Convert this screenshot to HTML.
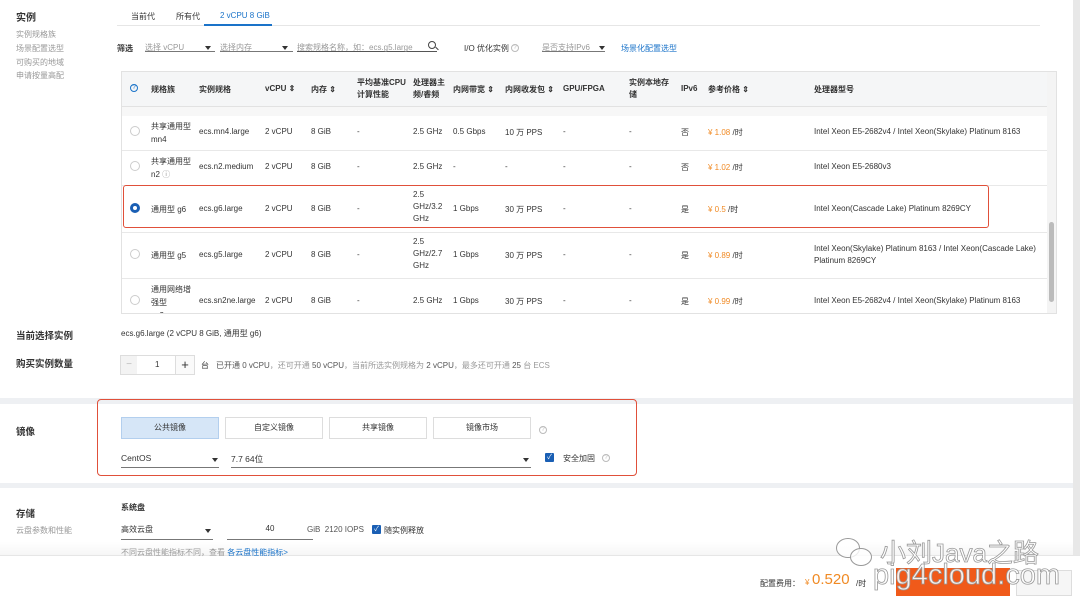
<!DOCTYPE html><html><head><meta charset="utf-8"><style>
*{margin:0;padding:0;box-sizing:border-box}
body{width:1080px;height:600px;overflow:hidden;background:#eef0f3;font-family:"Liberation Sans","Noto Sans CJK SC",sans-serif;font-size:8px;color:#333;position:relative}
div,span{position:absolute;white-space:nowrap}
.p{background:#fff;left:0;width:1073px}
.g{color:#999}.b{color:#1a73c9}.o{color:#f08a24}
.lb{font-size:9.5px;font-weight:bold;color:#333}
.ul{border-bottom:1px solid #777;height:10px}
.tri{width:0;height:0;border-left:3px solid transparent;border-right:3px solid transparent;border-top:4px solid #333}
.q{width:8px;height:8px;border:1px solid #bbb;border-radius:50%;font-size:6px;color:#bbb;text-align:center;line-height:6px}
.rad{width:10px;height:10px;border:1px solid #ccc;border-radius:50%;background:#fff}
.hl{height:1px;background:#e8e8e8;left:122px;width:925px}
.btn{height:22px;border:1px solid #ddd;background:#fff;text-align:center;line-height:20px;font-size:8px;top:417px}
.cb{width:9px;height:9px;background:#1a5fb4;border-radius:1px;color:#fff;font-size:7px;line-height:9px;text-align:center}
.wm{color:rgba(255,255,255,0.9);-webkit-text-stroke:0.8px #999}
</style></head><body>
<div class="p" style="top:0;height:398px"></div>
<div class="p" style="top:404px;height:79px"></div>
<div class="p" style="top:488px;height:67px;background:linear-gradient(#fff 80%,#f6f6f6)"></div>
<div style="left:0;top:555px;width:1080px;height:45px;background:#fff;border-top:1px solid #e6e6e6"></div>
<div style="left:1073px;top:0;width:7px;height:555px;background:#e8e8e8"></div>

<div class="lb" style="left:16px;top:9px;font-size:10px">实例</div>
<div class="g" style="left:16px;top:29px">实例规格族</div>
<div class="g" style="left:16px;top:43px">场景配置选型</div>
<div class="g" style="left:16px;top:57px">可购买的地域</div>
<div class="g" style="left:16px;top:70px">申请按量高配</div>

<div style="left:117px;top:25px;width:923px;height:1px;background:#e6e6e6"></div>
<div style="left:131px;top:11px">当前代</div>
<div style="left:176px;top:11px">所有代</div>
<div class="b" style="left:220px;top:11px">2 vCPU 8 GiB</div>
<div style="left:204px;top:24px;width:68px;height:2px;background:#1a73c9"></div>

<div style="left:117px;top:43px;font-weight:bold">筛选</div>
<div class="ul g" style="left:145px;top:42px;width:70px">选择 vCPU</div><div class="tri" style="left:205px;top:46px"></div>
<div class="ul g" style="left:220px;top:42px;width:73px">选择内存</div><div class="tri" style="left:282px;top:46px"></div>
<div class="ul g" style="left:297px;top:42px;width:140px;border-color:#555">搜索规格名称，如：ecs.g5.large</div>
<div style="left:428px;top:41px;width:8px;height:8px;border:1px solid #444;border-radius:50%"></div>
<div style="left:435px;top:48px;width:4px;height:1px;background:#444;transform:rotate(45deg)"></div>
<div style="left:464px;top:43px">I/O 优化实例</div><div class="q" style="left:511px;top:44px">?</div>
<div class="ul g" style="left:542px;top:42px;width:63px">是否支持IPv6</div><div class="tri" style="left:599px;top:46px"></div>
<div class="b" style="left:621px;top:43px">场景化配置选型</div>

<div style="left:121px;top:71px;width:936px;height:243px;border:1px solid #e2e2e2;background:#fff"></div>
<div style="left:122px;top:72px;width:925px;height:35px;background:#f5f6f7;border-bottom:1px solid #e2e2e2"></div>
<div style="left:122px;top:107px;width:925px;height:9px;background:#f7f7f7"></div>
<div style="left:1047px;top:72px;width:9px;height:241px;background:#f4f4f4"></div>
<div style="left:1049px;top:222px;width:5px;height:80px;background:#bbb;border-radius:3px"></div>
<div class="q" style="left:130px;top:84px;border-color:#1a73c9;color:#1a73c9">?</div>
<div style="top:84px;left:151px;font-weight:bold">规格族</div>
<div style="top:84px;left:199px;font-weight:bold">实例规格</div>
<div style="top:84px;left:265px;font-weight:bold">vCPU ⇕</div>
<div style="top:84px;left:311px;font-weight:bold">内存 ⇕</div>
<div style="top:77px;left:357px;font-weight:bold;line-height:12px">平均基准CPU<br>计算性能</div>
<div style="top:77px;left:413px;font-weight:bold;line-height:12px">处理器主<br>频/睿频</div>
<div style="top:84px;left:453px;font-weight:bold">内网带宽 ⇕</div>
<div style="top:84px;left:505px;font-weight:bold">内网收发包 ⇕</div>
<div style="top:84px;left:563px;font-weight:bold">GPU/FPGA</div>
<div style="top:77px;left:629px;font-weight:bold;line-height:12px">实例本地存<br>储</div>
<div style="top:84px;left:681px;font-weight:bold">IPv6</div>
<div style="top:84px;left:708px;font-weight:bold">参考价格 ⇕</div>
<div style="top:84px;left:814px;font-weight:bold">处理器型号</div>

<div class="hl" style="top:150px"></div><div class="hl" style="top:185px"></div><div class="hl" style="top:232px"></div><div class="hl" style="top:278px"></div>

<div class="rad" style="left:130px;top:126px"></div>
<div style="left:151px;top:120px;line-height:13px">共享通用型<br>mn4</div>
<div style="left:199px;top:127px">ecs.mn4.large</div><div style="left:265px;top:127px">2 vCPU</div><div style="left:311px;top:127px">8 GiB</div><div style="left:357px;top:127px">-</div><div style="left:413px;top:127px">2.5 GHz</div><div style="left:453px;top:127px">0.5 Gbps</div><div style="left:505px;top:127px">10 万 PPS</div><div style="left:563px;top:127px">-</div><div style="left:629px;top:127px">-</div><div style="left:681px;top:127px">否</div><div style="left:708px;top:127px"><span class="o" style="position:static">¥ 1.08</span> /时</div><div style="left:814px;top:127px">Intel Xeon E5-2682v4 / Intel Xeon(Skylake) Platinum 8163</div>

<div class="rad" style="left:130px;top:161px"></div>
<div style="left:151px;top:155px;line-height:13px">共享通用型<br>n2 <span class="g" style="position:static">ⓘ</span></div>
<div style="left:199px;top:162px">ecs.n2.medium</div><div style="left:265px;top:162px">2 vCPU</div><div style="left:311px;top:162px">8 GiB</div><div style="left:357px;top:162px">-</div><div style="left:413px;top:162px">2.5 GHz</div><div style="left:453px;top:162px">-</div><div style="left:505px;top:162px">-</div><div style="left:563px;top:162px">-</div><div style="left:629px;top:162px">-</div><div style="left:681px;top:162px">否</div><div style="left:708px;top:162px"><span class="o" style="position:static">¥ 1.02</span> /时</div><div style="left:814px;top:162px">Intel Xeon E5-2680v3</div>

<div style="left:123px;top:185px;width:866px;height:43px;border:1.5px solid #e0503a;border-radius:3px"></div>
<div class="rad" style="left:130px;top:203px;border:3px solid #1a5fb4"></div>
<div style="left:151px;top:204px">通用型 g6</div><div style="left:199px;top:204px">ecs.g6.large</div><div style="left:265px;top:204px">2 vCPU</div><div style="left:311px;top:204px">8 GiB</div><div style="left:357px;top:204px">-</div><div style="left:413px;top:189px;line-height:12px">2.5<br>GHz/3.2<br>GHz</div><div style="left:453px;top:204px">1 Gbps</div><div style="left:505px;top:204px">30 万 PPS</div><div style="left:563px;top:204px">-</div><div style="left:629px;top:204px">-</div><div style="left:681px;top:204px">是</div><div style="left:708px;top:204px"><span class="o" style="position:static">¥ 0.5</span> /时</div><div style="left:814px;top:204px">Intel Xeon(Cascade Lake) Platinum 8269CY</div>

<div class="rad" style="left:130px;top:249px"></div>
<div style="left:151px;top:250px">通用型 g5</div><div style="left:199px;top:250px">ecs.g5.large</div><div style="left:265px;top:250px">2 vCPU</div><div style="left:311px;top:250px">8 GiB</div><div style="left:357px;top:250px">-</div><div style="left:413px;top:236px;line-height:12px">2.5<br>GHz/2.7<br>GHz</div><div style="left:453px;top:250px">1 Gbps</div><div style="left:505px;top:250px">30 万 PPS</div><div style="left:563px;top:250px">-</div><div style="left:629px;top:250px">-</div><div style="left:681px;top:250px">是</div><div style="left:708px;top:250px"><span class="o" style="position:static">¥ 0.89</span> /时</div><div style="left:814px;top:243px;line-height:12px">Intel Xeon(Skylake) Platinum 8163 / Intel Xeon(Cascade Lake)<br>Platinum 8269CY</div>

<div class="rad" style="left:130px;top:295px"></div>
<div style="left:151px;top:283px;line-height:13px;height:30px;overflow:hidden">通用网络增<br>强型<br>sn2ne</div>
<div style="left:199px;top:296px">ecs.sn2ne.large</div><div style="left:265px;top:296px">2 vCPU</div><div style="left:311px;top:296px">8 GiB</div><div style="left:357px;top:296px">-</div><div style="left:413px;top:296px">2.5 GHz</div><div style="left:453px;top:296px">1 Gbps</div><div style="left:505px;top:296px">30 万 PPS</div><div style="left:563px;top:296px">-</div><div style="left:629px;top:296px">-</div><div style="left:681px;top:296px">是</div><div style="left:708px;top:296px"><span class="o" style="position:static">¥ 0.99</span> /时</div><div style="left:814px;top:296px">Intel Xeon E5-2682v4 / Intel Xeon(Skylake) Platinum 8163</div>

<div class="lb" style="left:16px;top:328px">当前选择实例</div>
<div style="left:121px;top:328px">ecs.g6.large (2 vCPU 8 GiB, 通用型 g6)</div>
<div class="lb" style="left:16px;top:356px">购买实例数量</div>
<div style="left:120px;top:355px;width:75px;height:20px;border:1px solid #ddd;background:#fff"></div>
<div style="left:121px;top:356px;width:16px;height:18px;background:#f3f3f3;color:#bbb;text-align:center;line-height:18px;font-size:10px">−</div>
<div style="left:155px;top:360px">1</div>
<div style="left:175px;top:356px;width:19px;height:18px;border-left:1px solid #ddd;background:#fafafa;text-align:center;line-height:17px;font-size:13px">+</div>
<div style="left:201px;top:360px">台</div>
<div class="g" style="left:216px;top:360px"><span style="position:static;color:#555">已开通 0 vCPU</span>，还可开通 <span style="position:static;color:#555">50 vCPU</span>，当前所选实例规格为 <span style="position:static;color:#555">2 vCPU</span>，最多还可开通 <span style="position:static;color:#555">25</span> 台 ECS</div>

<div class="lb" style="left:16px;top:424px">镜像</div>
<div style="left:97px;top:399px;width:540px;height:77px;border:1.5px solid #e0503a;border-radius:4px"></div>
<div class="btn" style="left:121px;width:98px;background:#d6e6f7;border-color:#b3cfee">公共镜像</div>
<div class="btn" style="left:225px;width:98px">自定义镜像</div>
<div class="btn" style="left:329px;width:98px">共享镜像</div>
<div class="btn" style="left:433px;width:98px">镜像市场</div>
<div class="q" style="left:539px;top:426px">?</div>
<div class="ul" style="left:121px;top:453px;width:98px;height:15px;font-size:8.5px">CentOS</div><div class="tri" style="left:212px;top:458px"></div>
<div class="ul" style="left:231px;top:453px;width:300px;height:15px;font-size:8.5px">7.7 64位</div><div class="tri" style="left:523px;top:458px"></div>
<div class="cb" style="left:545px;top:453px">✓</div>
<div style="left:563px;top:453px">安全加固</div><div class="q" style="left:602px;top:454px">?</div>

<div class="lb" style="left:16px;top:506px">存储</div>
<div class="g" style="left:16px;top:525px">云盘参数和性能</div>
<div style="left:121px;top:502px;font-weight:bold">系统盘</div>
<div class="ul" style="left:121px;top:524px;width:92px;height:16px">高效云盘</div><div class="tri" style="left:205px;top:529px"></div>
<div class="ul" style="left:227px;top:524px;width:86px;height:16px;text-align:center">40</div>
<div style="left:307px;top:525px;color:#555">GiB&nbsp; 2120 IOPS</div>
<div class="cb" style="left:372px;top:525px">✓</div>
<div style="left:384px;top:525px">随实例释放</div>
<div class="g" style="left:121px;top:547px">不同云盘性能指标不同，查看 <span class="b" style="position:static">各云盘性能指标&gt;</span></div>

<div style="left:760px;top:578px;color:#333">配置费用：</div>
<div class="o" style="left:805px;top:578px">¥</div>
<div class="o" style="left:812px;top:571px;font-size:15px">0.520</div>
<div style="left:856px;top:578px">/时</div>
<div style="left:896px;top:568px;width:114px;height:28px;background:#f05a1a"></div>
<div style="left:1016px;top:570px;width:56px;height:26px;border:1px solid #ddd;background:#f6f6f6"></div>
<div class="wm" style="left:880px;top:533px;font-size:26px">小刘Java之路</div>
<div class="wm" style="left:873px;top:559px;font-size:29px">pig4cloud.com</div>
<div style="left:836px;top:538px;width:24px;height:20px;border:1.5px solid #999;border-radius:50%;background:rgba(255,255,255,.8)"></div>
<div style="left:850px;top:548px;width:22px;height:18px;border:1.5px solid #999;border-radius:50%;background:rgba(255,255,255,.8)"></div>
</body></html>
